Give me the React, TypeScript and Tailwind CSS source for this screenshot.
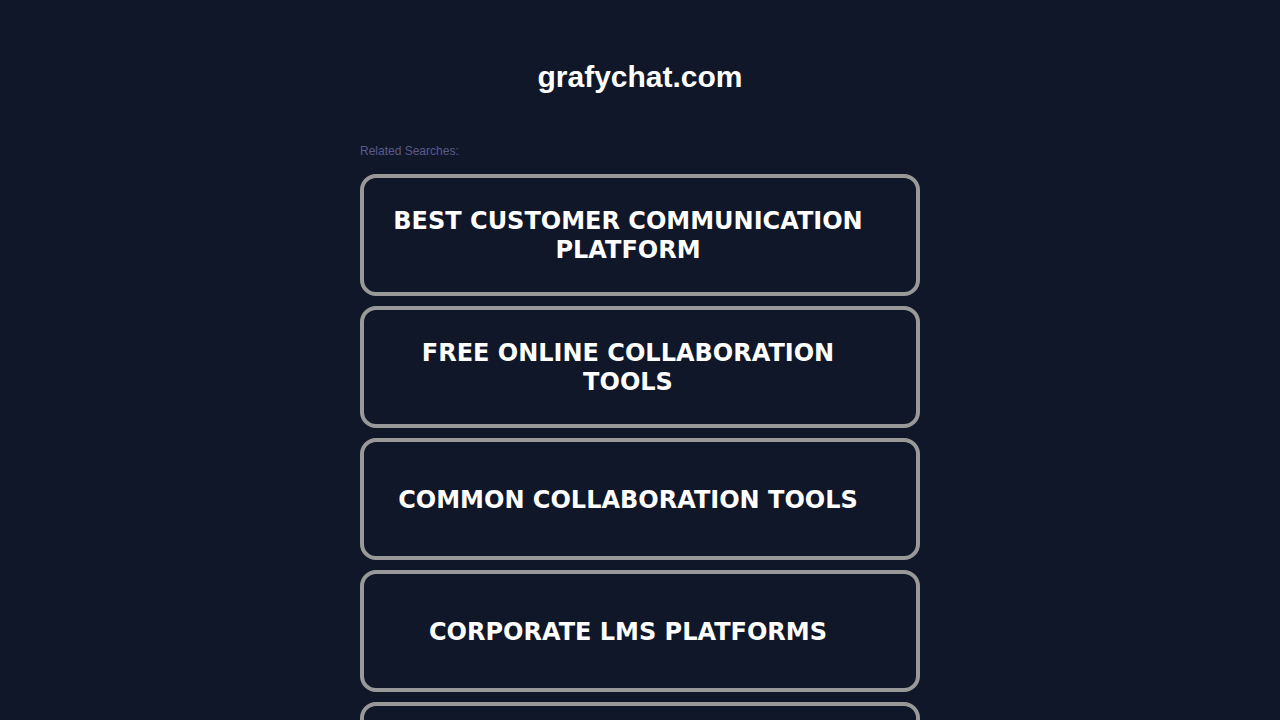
const searches = [
  "Best Customer Communication Platform",
  "Free Online Collaboration Tools",
  "Common Collaboration Tools",
  "Corporate LMS Platforms",
];

type SearchLinkProps = {
  label: string;
};

function SearchLink({ label }: SearchLinkProps) {
  return (
    <a
      href="#"
      className="flex items-center min-h-[122px] w-full rounded-2xl border-4 border-[#999999] pt-0.5 pl-5 pr-11 text-center uppercase text-white font-bold text-2xl leading-[29px] font-['Verdana','DejaVu_Sans',sans-serif] hover:border-white"
    >
      <span className="flex-1">{label}</span>
    </a>
  );
}

export default function App() {
  return (
    <div className="h-screen overflow-hidden bg-[#101729] font-['Liberation_Sans',Arial,sans-serif]">
      <header className="pt-14 text-center">
        <h1 className="text-[30px] leading-[42px] font-bold text-white">
          grafychat.com
        </h1>
      </header>

      <main className="mx-auto w-full max-w-[560px] pt-[46px]">
        <h2 className="text-xs leading-[14px] text-[#5b5b8b]">
          Related Searches:
        </h2>

        <nav className="mt-4 flex flex-col gap-2.5">
          {searches.map((label) => (
            <SearchLink key={label} label={label} />
          ))}
          <a
            href="#"
            aria-label="More"
            className="min-h-[122px] w-full rounded-2xl border-4 border-[#999999]"
          />
        </nav>
      </main>
    </div>
  );
}
